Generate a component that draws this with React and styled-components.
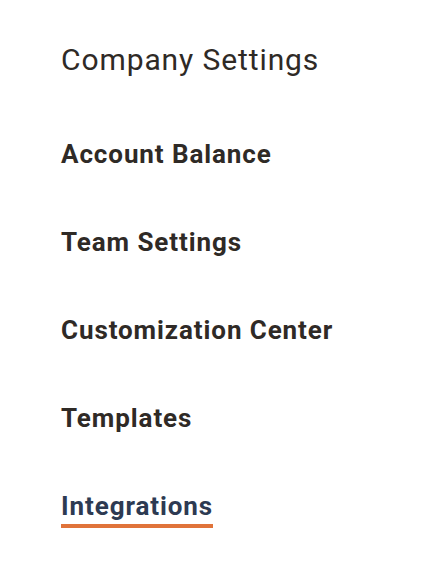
import styled, { createGlobalStyle } from 'styled-components';

const GlobalStyle = createGlobalStyle`
  body {
    margin: 0;
    background: #ffffff;
    font-family: Roboto, "Liberation Sans", sans-serif;
  }
`;

const items = ['Account Balance', 'Team Settings', 'Customization Center', 'Templates', 'Integrations'];

const App = () => {
  return (
    <>
      <GlobalStyle />
      <S_Nav>
        <S_Title>Company Settings</S_Title>
        <S_List>
          {items.map((item) => (
            <S_Item key={item} $active={item === 'Integrations'}>
              {item}
            </S_Item>
          ))}
        </S_List>
      </S_Nav>
    </>
  );
};

export default App;

const S_Nav = styled.nav`
  display: flex;
  flex-direction: column;
  padding: 40px 61px 0;
`;

const S_Title = styled.h2`
  margin: 0;
  font-size: 30px;
  font-weight: 400;
  line-height: 40px;
  letter-spacing: 0.03em;
  color: #2f2a26;
`;

const S_List = styled.ul`
  list-style: none;
  margin: 59px 0 0;
  padding: 0;
  display: flex;
  flex-direction: column;
  gap: 51px;
`;

const S_Item = styled.li`
  align-self: flex-start;
  font-size: 26px;
  font-weight: 700;
  line-height: 30px;
  letter-spacing: 0.035em;
  padding-bottom: 3px;
  color: ${(p) => (p.$active ? '#2d3a52' : '#2f2a26')};
  border-bottom: 4px solid ${(p) => (p.$active ? '#e0733a' : 'transparent')};
`;
